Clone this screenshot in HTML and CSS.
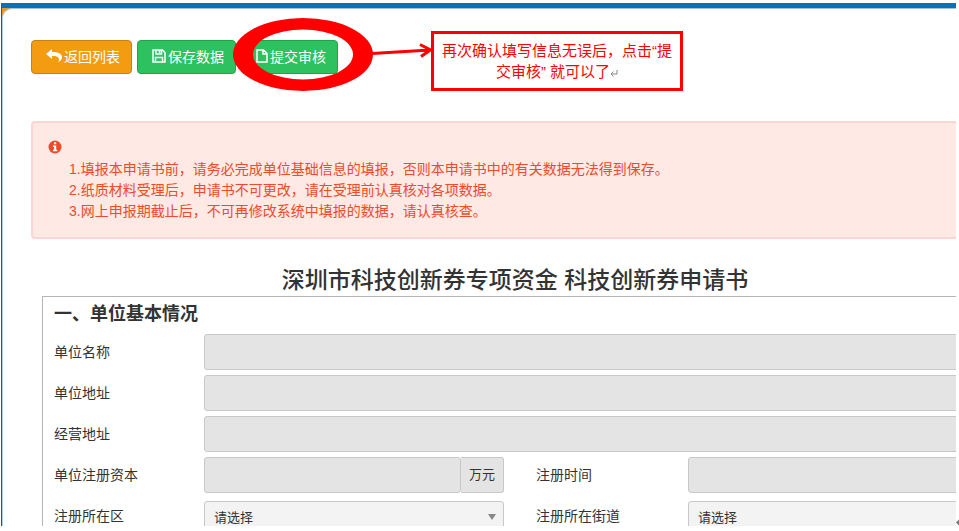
FILE: index.html
```html
<!DOCTYPE html>
<html lang="zh-CN">
<head>
    <meta charset="UTF-8">
    <meta name="viewport" content="width=device-width, initial-scale=1.0">
    <title>科技创新券申请书</title>
    <link rel="stylesheet" href="styles.css">
</head>
<body>
    <div class="screen">
        <main class="panel">
            <div class="content">
                <div class="toolbar">
                    <button type="button" class="btn btn-back">
                        <svg class="icon icon-back" viewBox="0 0 16 14"><path d="M6 0 0 5l6 5V7c4 0 7 .5 7 3.500 0 1-.4 2-.9 3C14 12 16 10.500 16 8.500 16 4.500 12 3 6 3z"/></svg>
                        返回列表
                    </button>
                    <button type="button" class="btn btn-green">
                        <svg class="icon" viewBox="0 0 14 14"><path class="line" d="M1 1h9.500L13 3.500V13H1zM4 1v4h5.500V1M3.500 13V8.500h7V13M7.500 1.500v2.500"/></svg>
                        保存数据
                    </button>
                    <button type="button" class="btn btn-green">
                        <svg class="icon icon-file" viewBox="0 0 12 14"><path class="line" d="M1 1h6.500L11 4.500V13H1zM7 1v4h4"/></svg>
                        提交审核
                    </button>
                </div>

                <div class="alert">
                    <svg class="alert-icon" viewBox="0 0 14 14"><circle cx="7" cy="7" r="6.500"/><path d="M6 2.300h2.200v2H6zM5 5.400h3.200v4.400H9.300v1.500H5V9.800h1.100V6.900H5z"/></svg>
                    <p>1.填报本申请书前，请务必完成单位基础信息的填报，否则本申请书中的有关数据无法得到保存。</p>
                    <p>2.纸质材料受理后，申请书不可更改，请在受理前认真核对各项数据。</p>
                    <p>3.网上申报期截止后，不可再修改系统中填报的数据，请认真核查。</p>
                </div>

                <h1 class="form-title">深圳市科技创新券专项资金 科技创新券申请书</h1>

                <form class="form-box">
                    <h2 class="section-title">一、单位基本情况</h2>
                    <div class="row">
                        <label for="unitName">单位名称</label>
                        <input type="text" id="unitName" class="field" readonly>
                    </div>
                    <div class="row">
                        <label for="unitAddress">单位地址</label>
                        <input type="text" id="unitAddress" class="field" readonly>
                    </div>
                    <div class="row">
                        <label for="bizAddress">经营地址</label>
                        <input type="text" id="bizAddress" class="field" readonly>
                    </div>
                    <div class="row">
                        <label for="capital">单位注册资本</label>
                        <div class="input-group">
                            <input type="text" id="capital" class="field" readonly>
                            <span class="addon">万元</span>
                        </div>
                        <label for="regDate" class="second">注册时间</label>
                        <div class="input-group">
                            <input type="text" id="regDate" class="field" readonly>
                        </div>
                    </div>
                    <div class="row">
                        <label for="district">注册所在区</label>
                        <div class="select-wrap">
                            <select id="district"><option>请选择</option></select>
                            <svg class="caret" viewBox="0 0 8 6"><path d="M0 0h8L4 6z"/></svg>
                        </div>
                        <label for="street" class="second">注册所在街道</label>
                        <div class="select-wrap">
                            <select id="street"><option>请选择</option></select>
                            <svg class="caret" viewBox="0 0 8 6"><path d="M0 0h8L4 6z"/></svg>
                        </div>
                    </div>
                </form>
            </div>
        </main>
    </div>

    <!-- step hint drawn over the page -->
    <svg class="ring" viewBox="0 0 200 76">
        <path fill-rule="evenodd" d="M0 37.500a70 36.500 0 1 0 140 0a70 36.500 0 1 0-140 0zM20 37.500a50 25 0 1 1 100 0a50 25 0 1 1-100 0z"/>
        <path class="arrow" d="M139 36.500 197 33M187 27.500 197.500 33 188 39.500"/>
    </svg>
    <div class="callout">再次确认填写信息无误后，点击“提交审核” 就可以了<svg class="mark" viewBox="0 0 8 8"><path d="M7 1v4H1M3.500 2.500 1 5l2.500 2.500"/></svg></div>
    <svg class="page-mark" viewBox="0 0 4 8"><path d="M4 0v8L0 4z"/></svg>
</body>
</html>
```
FILE: styles.css
```css
* {
    margin: 0;
    padding: 0;
    box-sizing: border-box;
}

body {
    height: 100vh;
    padding: 3px 3px 5px 1px;
    overflow: hidden;
    position: relative;
    background-color: #fff;
    font-family: "Liberation Sans", "Noto Sans CJK SC", sans-serif;
    font-size: 14px;
    line-height: 21px;
    color: #333;
}

.screen {
    height: 100%;
    overflow: hidden;
    border-top: 5px solid #0a70b8;
    border-left: 1px solid #14598f;
    background-color: #e8952f;
}

.panel {
    min-height: 100%;
    padding: 31px 0 0 28px;
    border-top: 1px solid #9fc3dc;
    border-left: 1px solid #b5cfe0;
    border-radius: 10px 0 0 0;
    background-color: #fff;
}

/* the form is wider than the visible area */
.content {
    margin-right: -43px;
}

.toolbar {
    display: flex;
    gap: 5px;
}

.btn {
    display: flex;
    align-items: center;
    justify-content: center;
    gap: 2px;
    height: 34px;
    padding: 0 11px 2px 14px;
    border: 1px solid #1fa34b;
    border-radius: 4px;
    font-family: inherit;
    font-size: 14px;
    color: #fff;
    cursor: pointer;
}

.btn-back {
    background-color: #f39c12;
    border-color: #c9820f;
}

.btn-green {
    background-color: #2dc25f;
}

.icon {
    width: 14px;
    height: 14px;
    fill: #fff;
}

.icon-back {
    width: 16px;
}

.icon-file {
    width: 12px;
}

.line {
    fill: none;
    stroke: #fff;
    stroke-width: 1.5;
}

.alert {
    margin-top: 47px;
    padding: 17px 15px 15px;
    border: 2px solid #fdd6d3;
    border-radius: 4px;
    background-color: #ffe9e4;
    color: #ef4a2b;
}

.alert p {
    padding-left: 21px;
}

.alert-icon {
    display: block;
    width: 14px;
    height: 14px;
    margin-bottom: 5px;
    fill: #ef4a2b;
}

.alert-icon path {
    fill: #fff;
}

.form-title {
    margin-top: 26px;
    font-size: 23px;
    font-weight: 500;
    line-height: 31px;
    text-align: center;
}

.form-box {
    margin-left: 11px;
    padding: 0 10px 0 11px;
    border: 1px solid #b5b5b5;
}

.section-title {
    margin-bottom: 2px;
    font-size: 18px;
    line-height: 35px;
}

.row {
    display: flex;
    margin-bottom: 5px;
}

.row label {
    flex: none;
    width: 150px;
    line-height: 36px;
}

.row .second {
    width: 184px;
    padding-left: 32px;
}

.field {
    flex: 1;
    min-width: 0;
    height: 36px;
    padding: 0 9px;
    border: 1px solid #c8c8c8;
    border-radius: 3px;
    background-color: #e4e4e4;
    font-size: 14px;
}

.input-group {
    flex: 1;
    display: flex;
}

.addon {
    width: 43px;
    border: 1px solid #c8c8c8;
    border-left: 0;
    border-radius: 0 3px 3px 0;
    background-color: #e4e4e4;
    font-size: 13px;
    line-height: 34px;
    text-align: center;
}

.select-wrap {
    flex: 1;
    position: relative;
    margin-top: 3px;
}

.select-wrap select {
    width: 100%;
    height: 32px;
    padding: 0 9px;
    border: 1px solid #c8c8c8;
    border-radius: 3px;
    background-color: #f3f3f3;
    appearance: none;
    font-family: inherit;
    font-size: 13px;
    color: #333;
}

.caret {
    position: absolute;
    top: 13px;
    right: 8px;
    width: 8px;
    height: 6px;
    fill: #888;
}

.ring {
    position: absolute;
    top: 17px;
    left: 233px;
    width: 200px;
    height: 76px;
    fill: #f00;
}

.arrow {
    fill: none;
    stroke: #f00;
    stroke-width: 3;
}

.callout {
    position: absolute;
    top: 31px;
    left: 431px;
    width: 252px;
    height: 60px;
    padding: 6px 5px;
    border: 3px solid #f00;
    background-color: #fff;
    color: #f00;
    font-size: 15px;
    text-align: center;
}

.mark {
    width: 8px;
    height: 8px;
    fill: none;
    stroke: #888;
}

.page-mark {
    position: absolute;
    right: 0;
    bottom: 5px;
    width: 3px;
    height: 7px;
    fill: #777;
}
```
